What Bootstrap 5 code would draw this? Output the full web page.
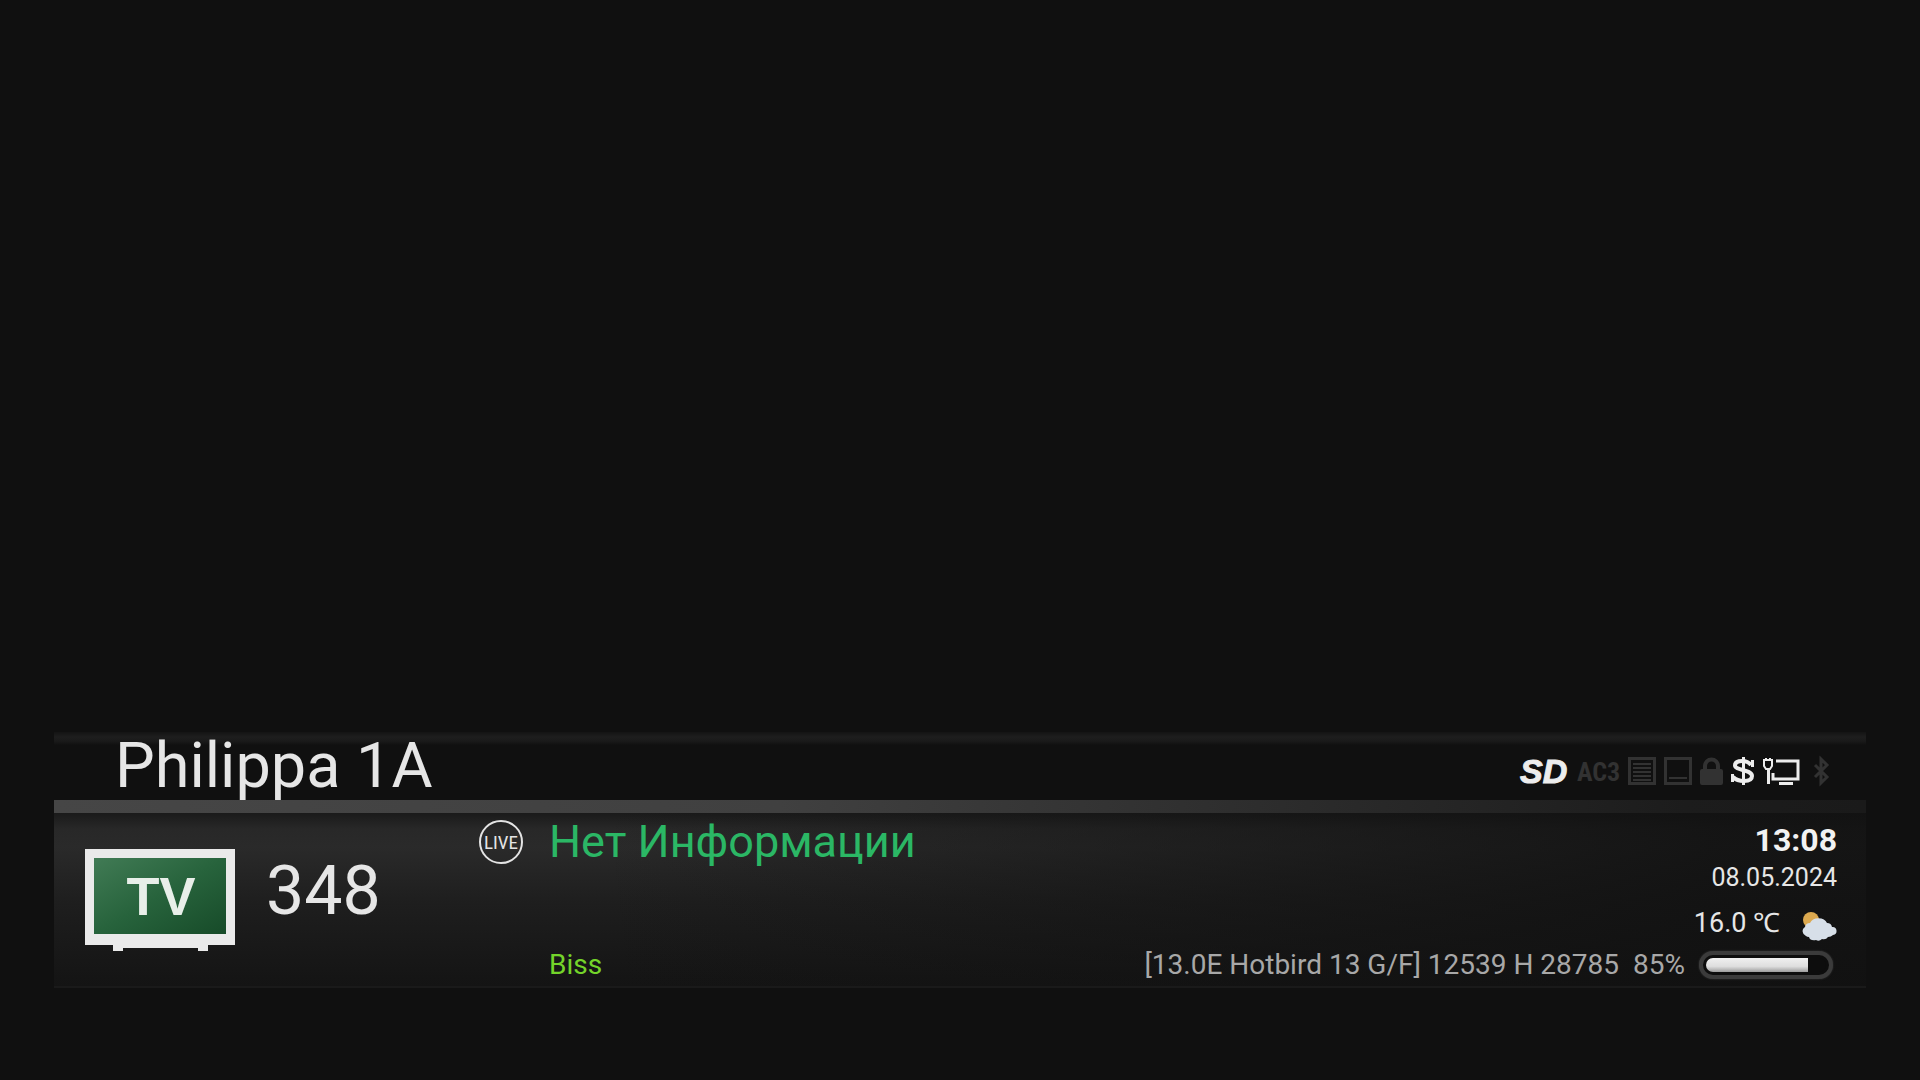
<!DOCTYPE html>
<html lang="ru">
<head>
<meta charset="utf-8">
<meta name="viewport" content="width=device-width, initial-scale=1">
<title>Philippa 1A</title>
<link href="https://cdn.jsdelivr.net/npm/bootstrap@5.3.0/dist/css/bootstrap.min.css" rel="stylesheet">
<style>
  body { background: #101010; color: #e6e6e6; font-family: Roboto, "Noto Sans", sans-serif; }
  .screen { padding: 0 54px 92px; }
  .infobar-head { height: 68px; padding: 0 36px 0 61px; background: linear-gradient(#141414, #1e1e1e 5px, #1a1a1a 9px, #101010 13px); }
  .channel-name { font-size: 63px; line-height: 66px; font-weight: 400; }
  .status-icons { gap: 8px; padding-top: 10px; color: #323232; }
  .status-icons .is-on { color: #ededed; }
  .divider { height: 13px; background: linear-gradient(90deg, #464646, #404040 40%, #1c1c1c 90%, #1a1a1a); }
  .infobar-body { border-bottom: 2px solid #1a1a1a;
    background: linear-gradient(90deg, rgba(16,16,16,0) 30%, rgba(17,17,17,.85) 92%), linear-gradient(#1a1a1a, #282828 16px, #2a2a2a 34px, #1e1e1e 90px, #141414); }
  .station { width: 425px; padding: 36px 0 0 31px; gap: 31px; }
  .number { font-size: 68px; line-height: 84px; }
  .event { padding: 7px 29px 5px 0; }
  .event-title { gap: 26px; }
  .event-title h2 { font-size: 45px; line-height: 44px; font-weight: 400; color: #2bb765; }
  .clock { font-size: 32px; line-height: 40px; font-weight: 700; color: #f2f2f2; }
  .date { font-size: 25px; line-height: 36px; }
  .weather { font-size: 27px; line-height: 52px; gap: 21px; padding-top: 1px; }
  .small-line { font-size: 28px; line-height: 32px; }
  .crypt { margin-left: 70px; color: #74d42a; }
  .tuning { gap: 14px; color: #a8a8a8; }
  .meter { width: 134px; height: 28px; padding: 3px; border: 4px solid #3b3b3b; border-radius: 14px; background: #0d0d0d; box-shadow: 0 0 2px #3b3b3b; }
  .meter .progress { height: 14px; border-radius: 7px; background: #0d0d0d; }
  .meter .progress-bar { background: linear-gradient(#f0f0f0, #dedede 60%, #9c9c9c); }
  svg { display: block; flex: none; overflow: visible; }
  .sd-text { font: italic 700 34px "Liberation Sans", sans-serif; stroke: currentColor; stroke-width: 1px; }
  .narrow-text { font-family: "Liberation Sans Narrow", "Roboto Condensed", "Liberation Sans", sans-serif; }
</style>
<script src="https://cdn.jsdelivr.net/npm/bootstrap@5.3.0/dist/js/bootstrap.bundle.min.js"></script>
</head>
<body>
<main class="screen min-vh-100 d-flex flex-column justify-content-end">
  <header class="infobar-head d-flex justify-content-between align-items-center">
    <h1 class="channel-name m-0">Philippa 1A</h1>
    <div class="status-icons d-flex align-items-center">
      <svg class="is-on" width="49" height="30" fill="currentColor" role="img" aria-label="SD"><text class="sd-text" x="0" y="27">SD</text></svg>
      <svg width="43" height="30" fill="currentColor" role="img" aria-label="AC3"><text class="narrow-text" x="0" y="25" font-size="26" font-weight="700">AC3</text></svg>
      <svg width="28" height="28" fill="none" stroke="currentColor" stroke-width="2"><path stroke-width="3" d="M1.500 1.500h25v25h-25z"/><path d="M5 7h18M5 11h18M5 15h18M5 19h18M5 23h18"/></svg>
      <svg width="28" height="28" fill="none" stroke="currentColor" stroke-width="2"><path stroke-width="3" d="M1.500 1.500h25v25h-25z"/><path d="M5 21h18"/></svg>
      <svg width="23" height="28" fill="currentColor"><path d="M2 12h1V9a8.500 8.500 0 0 1 17 0v3h1q2 0 2 2v12q0 2-2 2H2q-2 0-2-2V14q0-2 2-2zM7 12h9V9a4.500 4.500 0 0 0-9 0z"/></svg>
      <svg class="is-on" width="24" height="30" fill="none" stroke="currentColor"><path stroke-width="4" d="M20 9Q17 5 11 5 4 5 4 9.500C4 14.500 21 13.500 21 20Q21 25 13 25 6 25 2 21"/><path stroke-width="3" d="M12.500 1v28M21.500 4v7M1.500 18v8"/></svg>
      <svg class="is-on" width="37" height="28" fill="none" stroke="currentColor" stroke-width="3"><path d="M13 4h22v18H10v-6"/><path stroke-width="2" d="M1 3h8v6l-2 3h-4l-2-3zM3 3V1M7 3V1"/><path d="M5.500 11v16M16 26.500h14"/></svg>
      <svg class="ms-1" width="18" height="28" fill="none" stroke="currentColor" stroke-width="3"><path d="M3 8l12 12-6 6V2l6 6L3 20"/></svg>
    </div>
  </header>
  <div class="divider"></div>
  <section class="infobar-body d-flex">
    <div class="station d-flex align-items-start">
      <svg width="150" height="102" role="img" aria-label="TV">
        <defs><linearGradient id="tvScreen" x1="0" y1="0" x2="1" y2="1"><stop offset="0" stop-color="#417b55"/><stop offset=".5" stop-color="#27633c"/><stop offset="1" stop-color="#174b29"/></linearGradient></defs>
        <path fill="#eaeaea" d="M0 0h150v96h-27v6h-10v-3H38v3H28v-6H0z"/>
        <path fill="url(#tvScreen)" d="M9 9h132v76H9z"/>
        <text x="76" y="66" text-anchor="middle" font-family="Liberation Sans, sans-serif" font-weight="700" font-size="54" fill="#e8efe9">TV</text>
      </svg>
      <span class="number">348</span>
    </div>
    <div class="event flex-grow-1">
      <div class="d-flex justify-content-between">
        <div class="event-title d-flex align-items-start">
          <svg width="44" height="44" role="img" aria-label="LIVE"><circle cx="22" cy="22" r="21" fill="none" stroke="#e4e4e4" stroke-width="2"/><text class="narrow-text" x="22" y="29" text-anchor="middle" font-size="19" fill="#e4e4e4">LIVE</text></svg>
          <h2 class="m-0">Нет Информации</h2>
        </div>
        <div class="text-end">
          <div class="clock">13:08</div>
          <div class="date">08.05.2024</div>
          <div class="weather d-flex justify-content-end align-items-center">
            <span>16.0 ℃</span>
            <svg class="mt-2" width="36" height="32"><circle cx="10" cy="9" r="8" fill="#dca94f"/><path fill="#d7dfe8" d="M5 25a5 5 0 0 1-1-9 5 5 0 0 1 5-4 9 7 0 0 1 17 0 5 5 0 0 1 5 4 4 4 0 0 1 1 8q-2 2-5 2-2 3-6 2-3 3-6 1-6 1-7-3-2 0-3-1z"/></svg>
          </div>
        </div>
      </div>
      <div class="small-line d-flex justify-content-between align-items-center">
        <div class="crypt">Biss</div>
        <div class="tuning d-flex align-items-center me-1">
          <span>[13.0E Hotbird 13 G/F] 12539 H 28785</span>
          <span>85%</span>
          <div class="meter"><div class="progress" role="progressbar" aria-label="85%" aria-valuenow="85" aria-valuemin="0" aria-valuemax="100"><div class="progress-bar" style="width:85%"></div></div></div>
        </div>
      </div>
    </div>
  </section>
</main>
</body>
</html>
